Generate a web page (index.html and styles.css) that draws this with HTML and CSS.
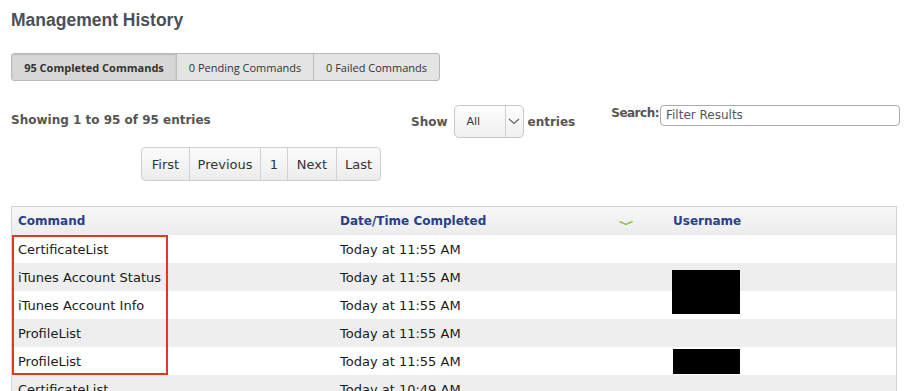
FILE: index.html
```html
<!DOCTYPE html>
<html>
<head>
<meta charset="utf-8">
<link rel="stylesheet" href="styles.css">
</head>
<body>
<div class="page">
  <h1 class="title">Management History</h1>
  <div class="tabs">
    <div class="tab active">95 Completed Commands</div>
    <div class="tab">0 Pending Commands</div>
    <div class="tab">0 Failed Commands</div>
  </div>
  <div class="controls">
    <div class="info">Showing 1 to 95 of 95 entries</div>
    <div class="length">
      <span class="lbl">Show</span>
      <div class="select"><span class="sel-val">All</span><span class="sel-arrow"><svg width="12" height="7" viewBox="0 0 12 7"><path d="M1 1 L6 5.5 L11 1" fill="none" stroke="#666" stroke-width="1.2"/></svg></span></div>
      <span class="lbl">entries</span>
    </div>
    <div class="search">
      <span class="lbl">Search:</span>
      <div class="input">Filter Results</div>
    </div>
  </div>
  <div class="pager-row">
    <div class="pager">
      <div class="pbtn">First</div>
      <div class="pbtn">Previous</div>
      <div class="pbtn">1</div>
      <div class="pbtn">Next</div>
      <div class="pbtn">Last</div>
    </div>
  </div>
  <div class="table">
    <div class="row head">
      <div class="c1">Command</div>
      <div class="c2">Date/Time Completed</div>
      <div class="c3"><svg width="16" height="6" viewBox="0 0 16 6"><path d="M1.5 1.5 L8 4.5 L14.5 1.5" fill="none" stroke="#8dc63f" stroke-width="1.4"/></svg></div>
      <div class="c4">Username</div>
    </div>
    <div class="body">
      <div class="row"><div class="c1">CertificateList</div><div class="c2">Today at 11:55 AM</div><div class="c3"></div><div class="c4"></div></div>
      <div class="row alt"><div class="c1">iTunes Account Status</div><div class="c2">Today at 11:55 AM</div><div class="c3"></div><div class="c4"></div></div>
      <div class="row"><div class="c1">iTunes Account Info</div><div class="c2">Today at 11:55 AM</div><div class="c3"></div><div class="c4"></div></div>
      <div class="row alt"><div class="c1">ProfileList</div><div class="c2">Today at 11:55 AM</div><div class="c3"></div><div class="c4"></div></div>
      <div class="row"><div class="c1">ProfileList</div><div class="c2">Today at 11:55 AM</div><div class="c3"></div><div class="c4"></div></div>
      <div class="row alt"><div class="c1">CertificateList</div><div class="c2">Today at 10:49 AM</div><div class="c3"></div><div class="c4"></div></div>
      <div class="highlight"></div>
      <div class="redact r1"></div>
      <div class="redact r2"></div>
    </div>
  </div>
</div>
</body>
</html>
```

FILE: styles.css
```css
* { box-sizing: border-box; }
html, body { margin: 0; padding: 0; background: #fff; overflow: hidden; }
body { font-family: "DejaVu Sans", sans-serif; color: #222; }
.page { padding: 0 5px 0 11px; width: 905px; }
.title {
  margin: 0; padding-top: 10px; height: 53px;
  font-family: "Liberation Sans", Arial, sans-serif;
  font-size: 17.5px; font-weight: bold; color: #4b4f58;
}
.tabs {
  display: flex; width: 429px; height: 28px;
  border: 1px solid #b8b8b8; border-radius: 3px; overflow: hidden;
  background: #e4e4e4;
}
.tab {
  display: flex; align-items: center; justify-content: center;
  font-family: "Open Sans", sans-serif;
  font-size: 11px; color: #333; border-left: 1px solid #bdbdbd;
}
.tab:nth-child(1) { width: 164px; border-left: none; }
.tab:nth-child(2) { width: 137px; }
.tab:nth-child(3) { flex: 1; }
.tab.active { background: #d7d7d7; font-weight: bold; box-shadow: inset 0 1px 2px rgba(0,0,0,0.12); }
.controls { display: flex; align-items: flex-start; height: 42px; margin-top: 24px; }
.controls > * { flex-shrink: 0; }
.info { width: 400px; font-size: 12px; font-weight: bold; color: #555; padding-top: 8px; }
.length { display: flex; align-items: center; height: 33px; }
.lbl { font-size: 12px; font-weight: bold; color: #555; }
.select {
  display: flex; width: 70px; height: 33px; margin: 0 4px 0 6px;
  border: 1px solid #c8c8c8; border-radius: 5px;
  background: linear-gradient(#fdfdfd, #f0f0f0);
}
.sel-val { width: 50px; font-size: 11px; padding-left: 12px; display: flex; align-items: center; color: #333; }
.sel-arrow { flex: 1; border-left: 1px solid #d0d0d0; display: flex; align-items: center; justify-content: center; }
.search { display: flex; align-items: flex-start; margin-left: auto; }
.search .lbl { padding-top: 1px; letter-spacing: -0.5px; }
.input {
  width: 240px; height: 21px; margin-left: 1px;
  border: 1px solid #aaa; border-radius: 4px;
  font-size: 12px; color: #555; padding: 2px 0 0 5px;
}
.pager-row { display: flex; padding-left: 130px; height: 59px; }
.pager {
  display: flex; height: 34px; border: 1px solid #cfcfcf; border-radius: 4px; overflow: hidden;
  background: linear-gradient(#fbfbfb, #ececec);
}
.pbtn {
  display: flex; align-items: center; justify-content: center;
  font-size: 13px; color: #333; border-left: 1px solid #d2d2d2; padding: 0 8px;
}
.pbtn:first-child { border-left: none; width: 47px; }
.pbtn:nth-child(2) { width: 71px; }
.pbtn:nth-child(3) { width: 27px; }
.pbtn:nth-child(4) { width: 49px; }
.pbtn:nth-child(5) { width: 44px; }
.table { width: 886px; border: 1px solid #d4d4d4; border-bottom: none; }
.row { display: flex; height: 28px; align-items: center; font-size: 13px; color: #1a1a1a; }
.row.alt { background: #eeeeee; }
.row.head { background: linear-gradient(#f7f7f7, #ececec); font-size: 12px; font-weight: bold; color: #27418a; }
.c1 { width: 328px; padding-left: 6px; }
.c2 { width: 270px; }
.c3 { width: 63px; display: flex; align-items: center; padding: 3px 0 0 8px; }
.c4 { flex: 1; }
.body { position: relative; }
.highlight { position: absolute; left: 0; top: 0; width: 156px; height: 140px; border: 2px solid #e2391e; }
.redact { position: absolute; background: #000; }
.r1 { left: 660px; top: 35px; width: 68px; height: 44px; }
.r2 { left: 661px; top: 114px; width: 67px; height: 25px; }
```
